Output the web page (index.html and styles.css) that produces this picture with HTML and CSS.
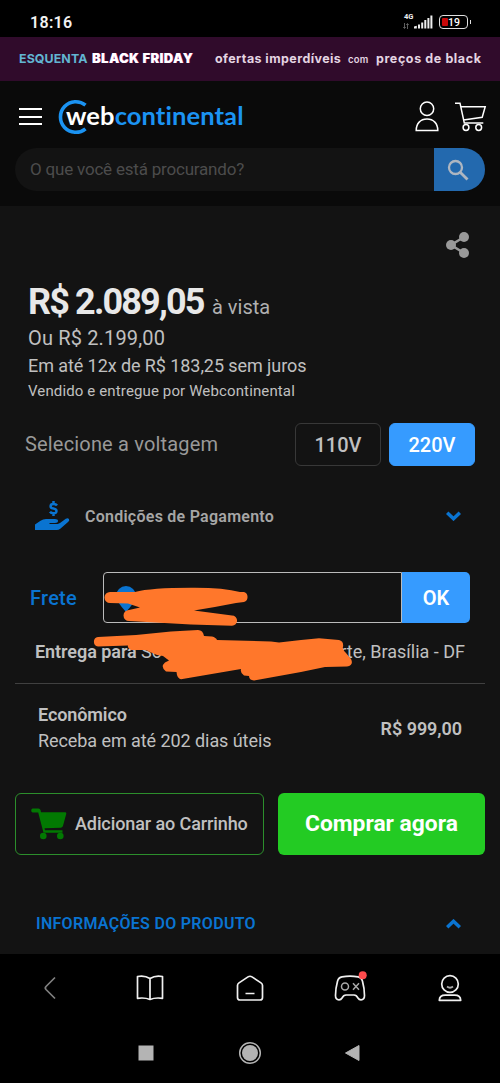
FILE: index.html
```html
<!DOCTYPE html>
<html lang="pt-BR">
<head>
<meta charset="utf-8">
<title>Webcontinental</title>
<link rel="stylesheet" href="styles.css">
</head>
<body>
<div class="status">
  <span class="clock">18:16</span>
  <div class="status-icons">
    <div class="network"><span class="net-type">4G</span>
      <svg class="arrows" width="6" height="6" viewBox="0 0 6 6" fill="none" stroke="#777" stroke-width=".8"><path d="M1.500 0v5M.3 4l1.200 1.500L2.700 4M4.500 6V1M3.300 2L4.500.5 5.700 2"/></svg>
    </div>
    <svg width="20" height="14" viewBox="0 0 20 14" fill="#eee"><path d="M1 13.500v-2l2.800-.8v2.800zM5 9.500h2v4H5zM8.200 7.500h2v6h-2zM11.300 5h2v8.500h-2zM14.400 3h2v10.500h-2zM17.400.5h2v13h-2z"/></svg>
    <div class="battery"><span class="battery-level"></span><span class="battery-text">19</span><span class="battery-tip"></span></div>
  </div>
</div>
<div class="promo">
  <span class="promo-pre">ESQUENTA</span><span class="promo-black">BLACK FRIDAY</span><span class="promo-offer">ofertas imperdíveis</span><span class="promo-com">com</span><span class="promo-price">preços de black</span>
</div>
<header class="header">
  <div class="header-row">
    <div class="burger"><i></i><i></i><i></i></div>
    <div class="logo">
      <svg class="logo-ring" width="32" height="36" viewBox="0 0 32 36" fill="none" stroke="#1b93f2" stroke-width="3.600"><path d="M27.500 6.200A15.300 15.300 0 1 0 27.500 29.800"/></svg>
      <span class="logo-web">web</span><span class="logo-cont">continental</span>
    </div>
    <div class="header-icons">
      <svg width="24" height="31" viewBox="0 0 24 31" fill="none" stroke="#fff" stroke-width="1.500"><circle cx="12" cy="7.700" r="6.700"/><path d="M1.200 29.500C1.200 22.500 5.500 18 12 18s10.800 4.500 10.800 11.500z"/></svg>
      <svg width="32" height="31" viewBox="0 0 32 31" fill="none" stroke="#fff" stroke-width="1.500"><path d="M0 2.200h5L9.300 22h19M5.800 5.800h24.400l-3 10.500L8.500 19"/><circle cx="11" cy="26.500" r="2.900"/><circle cx="23.700" cy="26.500" r="2.900"/></svg>
    </div>
  </div>
  <div class="search">
    <span class="search-text">O que você está procurando?</span>
    <div class="search-btn"><svg width="22" height="22" viewBox="0 0 22 22" fill="none" stroke="#aeb6c1" stroke-width="2.300"><circle cx="8.500" cy="8.500" r="6.500"/><path d="M13.200 13.200l7.300 7.300" stroke-width="2.800"/></svg></div>
  </div>
</header>
<main class="main">
  <div class="share"><svg width="24" height="26" viewBox="0 0 24 26" fill="#999" stroke="#999"><path d="M18 5L5 13l13 8" fill="none" stroke-width="2.500"/><g stroke="none"><circle cx="18" cy="5" r="5"/><circle cx="5" cy="13" r="5"/><circle cx="18" cy="21" r="5"/></g></svg></div>
  <section class="prices">
    <div class="price-row"><strong class="price">R$ 2.089,05</strong><span class="cash">à vista</span></div>
    <div class="or"><span>Ou R$ 2.199,00</span></div>
    <div class="parcels"><span>Em até 12x de R$ 183,25 sem juros</span></div>
    <div class="seller"><span>Vendido e entregue por Webcontinental</span></div>
  </section>
  <section class="voltage">
    <span class="voltage-label">Selecione a voltagem</span>
    <div class="volt">110V</div>
    <div class="volt volt-on">220V</div>
  </section>
  <section class="payment">
    <svg width="35" height="32" viewBox="0 0 35 32" fill="#0a74d1"><path d="M0 24.500l5.500-3.800Q8 19 11 19h9q3 0 3 1.900t-3 2h-5.500v1h8.200q1.300 0 2.300-.8l5.800-4.300q2-1.200 3.100.1 1 1.500-.6 2.800l-8 7q-1.600 1.300-3.500 1.300H0z"/><path d="M22 5.500Q21 4 18.500 4 15.600 4 15.600 6.200t2.900 2.300q3 .4 3 2.600t-3 2.200q-2.400 0-3.500-1.600M18.500 1v3.500M18.500 13v3" fill="none" stroke="#0a74d1" stroke-width="2.500"/></svg>
    <span class="payment-title">Condições de Pagamento</span>
    <svg width="15" height="10" viewBox="0 0 15 10" fill="none" stroke="#0a74d1" stroke-width="3.500"><path d="M1.200 1.700l6.300 6 6.300-6"/></svg>
  </section>
  <section class="shipping">
    <div class="zip-row">
      <span class="zip-label">Frete</span>
      <div class="zip-input"><svg width="20" height="26" viewBox="0 0 20 26"><path d="M10 0a10 10 0 0 1 10 10q0 5-10 16Q0 15 0 10A10 10 0 0 1 10 0z" fill="#0a74d1"/><circle cx="10" cy="9.500" r="3.500" fill="#131313"/></svg></div>
      <div class="zip-ok">OK</div>
    </div>
    <div class="deliver"><span class="deliver-b">Entrega para</span><span class="deliver-hid">So</span><span class="deliver-city">rte, Brasília - DF</span></div>
    <svg class="scribble" width="270" height="100" viewBox="90 585 270 100" fill="#ff772b">
      <path d="M109 592H134Q150 587.800 190 587.800 222 587.500 239 592H243A5.300 5.300 0 0 1 243 602L235 603Q215 607 193 610.500L231 615.500A5 5 0 0 1 231 625.700L190 624.500 128 621A5.500 5.500 0 0 1 128 610L139 607.500 127 603.500 109 603A5.500 5.500 0 0 1 109 592z"/>
      <path d="M97 637L135 635 170 631.500 197 630Q202 630 203 636L211 636.500Q215 637.500 216 640L270 641.500 278 642.500 300 640 318 638.300 338 640Q343 641 342 647 341 649 345 653L350 659Q353 665 346 666.500L324 667 300 672 253 680.500Q248 680 248 676L243 675.500Q239 673 240 669L180 679.300Q176 678.500 175.500 672L165 671.500Q159 667 164 662.500L168 660.500 162 656 156 655 149 652 145 650H130Q126 648 127 645.500L97 646.500A4.800 4.800 0 0 1 97 637z"/>
    </svg>
    <div class="option">
      <div class="option-info"><strong class="option-name">Econômico</strong><span class="option-time">Receba em até 202 dias úteis</span></div>
      <strong class="option-price">R$ 999,00</strong>
    </div>
  </section>
  <section class="actions">
    <div class="add"><svg width="36" height="32" viewBox="0 0 36 32" fill="#027902"><path d="M1.500.5h6q1.500 0 2 1.500l.5 2.200h24.500q1 .2.800 1.500L32 17.800q-.4 1.700-2 1.900l-16.500.6.500 2h17.500v2.500H12.500L7.200 4.500H1.500Q.2 4 .2 2.500T1.500.5z"/><circle cx="12.300" cy="28" r="3.300"/><circle cx="29.300" cy="28" r="3.300"/></svg><span class="add-text">Adicionar ao Carrinho</span></div>
    <div class="buy"><span>Comprar agora</span></div>
  </section>
  <section class="info">
    <span class="info-title">INFORMAÇÕES DO PRODUTO</span>
    <svg width="15" height="10" viewBox="0 0 15 10" fill="none" stroke="#0a74d1" stroke-width="3.500"><path d="M1.200 8.300l6.300-6 6.300 6"/></svg>
  </section>
</main>
<nav class="tabs">
  <div><svg width="32" height="32" viewBox="0 0 32 32" fill="none" stroke="#808080" stroke-width="1.700"><path d="M21 5.500l-9 9q-1.400 1.500 0 3l9 9"/></svg></div>
  <div><svg width="32" height="32" viewBox="0 0 32 32" fill="none" stroke="#f0f0f0" stroke-width="1.700" stroke-linejoin="round"><path d="M16 6.500q-5.500-3.500-12.500-2v21.800q7.500-1 12.500 1.200 5-2.200 12.500-1.200V4.500q-7-1.500-12.500 2zM16 6.500v21"/></svg></div>
  <div><svg width="32" height="32" viewBox="0 0 32 32" fill="none" stroke="#f0f0f0" stroke-width="1.700"><path d="M3.500 13.500q0-1.600 1.500-2.600l9-6q2-1.300 4 0l9 6q1.500 1 1.500 2.600v12q0 2.500-2.500 2.500H6q-2.500 0-2.500-2.500z"/><path d="M11.500 21.500h9" stroke-width="1.500"/></svg></div>
  <div><svg width="32" height="32" viewBox="0 0 32 32" fill="none" stroke="#f0f0f0" stroke-width="1.700"><path d="M8 4.800q8-1.200 16 0 3.500.5 4.500 4.500 2 7.500 2 14.200 0 4.300-3.500 4.300-2 0-3-1.800-1.500-3-4-3h-8q-2.500 0-4 3-1 1.800-3 1.800-3.500 0-3.500-4.300 0-6.700 2-14.200 1-4 4.500-4.500z"/><g stroke="#aaa" stroke-width="1.500"><circle cx="11" cy="14.500" r="3.500"/><path d="M19 11.300l6 6.400M25 11.300l-6 6.400"/></g><circle cx="28.700" cy="3.200" r="4" fill="#ff4b4d" stroke="none"/></svg></div>
  <div><svg width="32" height="32" viewBox="0 0 32 32" fill="none" stroke="#f0f0f0" stroke-width="1.700"><circle cx="16" cy="12" r="8.300"/><path d="M13 14.500q3 2.500 6 0" stroke="#aaa"/><path d="M5.300 28.300q.2-5.100 6-5.100h9.400q5.800 0 6 5.100z" stroke-linejoin="round"/></svg></div>
</nav>
<div class="sysnav">
  <svg width="16" height="16" viewBox="0 0 16 16"><path d="M.5.500h15v15H.5z" fill="#b4b4b4"/></svg>
  <svg width="24" height="24" viewBox="0 0 24 24"><circle cx="12" cy="12" r="10.300" fill="none" stroke="#b4b4b4" stroke-width="1.500"/><circle cx="12" cy="12" r="8" fill="#b4b4b4"/></svg>
  <svg width="16" height="18" viewBox="0 0 16 18"><path d="M15 1.500v15L1.500 9z" fill="#b4b4b4" stroke="#b4b4b4" stroke-linejoin="round"/></svg>
</div>
</body>
</html>
```
FILE: styles.css
```css
* { box-sizing: border-box; }
body { margin: 0; width: 500px; height: 1083px; overflow: hidden; background: #000; color: #c0c0c0; font-family: Roboto, sans-serif; }
svg { display: block; flex: none; }
span, strong { white-space: nowrap; }

.status { height: 37px; padding: 8px 30px 0; display: flex; justify-content: space-between; }
.clock { font-size: 16px; line-height: 30px; font-weight: 600; color: #f2f2f2; letter-spacing: 0.3px; }
.status-icons { display: flex; padding-top: 7px; height: 21px; margin-right: 2px; }
.network { width: 8px; display: flex; flex-direction: column; }
.net-type { font-size: 7.5px; line-height: 6px; font-weight: 700; color: #eee; margin: -1px 0 3px -1px; }
.arrows { margin-left: -2px; }
.battery { width: 29px; height: 14px; margin-left: 6px; border: 1.5px solid #e0e0e0; border-radius: 4px; position: relative; padding: 2px; display: flex; }
.battery-level { width: 6px; height: 8px; background: #c70808; border-radius: 1px; }
.battery-text { font-size: 10.5px; line-height: 9px; font-weight: 500; color: #fff; }
.battery-tip { position: absolute; right: -4px; top: 4px; width: 1.5px; height: 4px; background: #e0e0e0; }

.promo { height: 44px; background: #300b2b; color: #e4d5e2; padding: 0 0 1px 19px; display: flex; align-items: center; font-family: Inter, sans-serif; font-weight: 700; font-size: 12.5px; line-height: 16px; }
.promo-pre { width: 73px; color: #62b5d2; font-size: 12.4px; letter-spacing: 0.1px; }
.promo-black { width: 123px; color: #fff; font-weight: 900; font-size: 12.8px; letter-spacing: 0.55px; text-shadow: 0.5px 0 #e26cc8; }
.promo-offer { width: 133px; letter-spacing: 0.42px; }
.promo-com { width: 28px; font-size: 9.5px; font-weight: 600; padding-top: 3px; letter-spacing: 0.2px; }
.promo-price { letter-spacing: 0.6px; }

.header { height: 125px; padding: 0 15px; background: #0a0a0a; }
.header-row { height: 67px; padding: 18px 0 0 4px; display: flex; }
.burger { width: 23px; height: 17px; margin-top: 9px; display: flex; flex-direction: column; justify-content: space-between; }
.burger i { height: 2px; background: #fff; }
.logo { width: 200px; height: 36px; margin-left: 16px; position: relative; display: flex; padding-left: 8px; font-family: Lato, sans-serif; font-weight: 700; font-size: 25.5px; line-height: 32px; letter-spacing: 0.1px; }
.logo-ring { position: absolute; left: 0; top: 0; }
.logo-web, .logo-cont { position: relative; }
.logo-web { color: #fff; }
.logo-cont { color: #1b93f2; }
.header-icons { margin: 0 -2px 0 auto; padding-top: 2px; display: flex; gap: 16px; }
.search { height: 43px; border-radius: 22px; background: #131313; display: flex; overflow: hidden; }
.search-text { flex: 1; padding-left: 15px; font-size: 17px; letter-spacing: -0.2px; line-height: 43px; color: #4c4c4c; }
.search-btn { width: 51px; background: #2369ae; display: flex; padding: 11px 0 0 13px; }

.main { height: 748px; padding: 0 15px; background: #131313; }
.share { height: 80px; padding: 26px 15px 0 0; display: flex; justify-content: flex-end; }
.prices { padding-left: 13px; }
.price-row { height: 38px; display: flex; align-items: baseline; }
.price { font-size: 36px; line-height: 33px; color: #e8e8e8; width: 184px; letter-spacing: -1.85px; }
.cash { font-size: 20px; color: #b0b0b0; }
.or { font-size: 20px; letter-spacing: 0.15px; line-height: 29px; }
.parcels { font-size: 18px; letter-spacing: -0.08px; line-height: 26px; }
.seller { font-size: 15px; letter-spacing: 0.13px; line-height: 24px; }
.voltage { height: 63px; padding: 20px 10px 0; display: flex; gap: 8px; margin-bottom: 16px; }
.voltage-label { flex: 1; color: #999; font-size: 20px; letter-spacing: 0.17px; line-height: 43px; }
.volt { width: 86px; height: 43px; border: 1px solid #383838; border-radius: 6px; text-align: center; font-size: 20px; line-height: 42px; font-weight: 500; }
.volt-on { color: #fff; background: #369bff; border-color: #369bff; }
.payment { height: 68px; padding: 0 24px 0 20px; display: flex; align-items: center; }
.payment-title { flex: 1; margin-left: 15px; font-size: 16px; font-weight: 600; letter-spacing: 0.25px; color: #a6a6a6; }
.shipping { position: relative; height: 222px; padding-top: 22px; }
.zip-row { display: flex; height: 51px; padding-left: 15px; }
.zip-label { width: 73px; color: #0a74d1; font-size: 20px; letter-spacing: 0.25px; line-height: 53px; font-weight: 500; }
.zip-input { width: 299px; border: 1px solid #bbb; border-radius: 4px 0 0 4px; padding: 13px 12px 0; }
.zip-ok { width: 68px; color: #fff; background: #369bff; border-radius: 0 5px 5px 0; text-align: center; font-weight: 600; font-size: 20px; line-height: 53px; }
.deliver { height: 61px; border-bottom: 1px solid #404040; padding: 0 20px; display: flex; font-size: 18px; line-height: 58px; }
.deliver-b { width: 106px; font-weight: 600; letter-spacing: -0.05px; }
.deliver-hid { flex: 1; }
.scribble { position: absolute; left: 76px; top: 35px; }
.option { padding: 18px 23px 0; display: flex; justify-content: space-between; }
.option-info { display: flex; flex-direction: column; font-size: 18px; line-height: 26px; }
.option-name { font-weight: 600; letter-spacing: -0.1px; }
.option-time { letter-spacing: -0.07px; }
.option-price { font-size: 18px; line-height: 53px; font-weight: 600; letter-spacing: -0.05px; }
.actions { margin-top: 21px; display: flex; gap: 14px; }
.add { width: 249px; height: 62px; border: 1px solid #2c8f2c; border-radius: 6px; display: flex; align-items: center; padding-left: 15px; }
.add-text { margin-left: 8px; padding-bottom: 2px; font-size: 18px; font-weight: 500; letter-spacing: -0.1px; }
.buy { width: 207px; height: 62px; background: #23cb23; color: #fff; border-radius: 6px; text-align: center; font-size: 22.8px; line-height: 61px; font-weight: 700; }
.info { height: 99px; padding: 38px 24px 0 21px; display: flex; align-items: center; justify-content: space-between; }
.info-title { color: #0a74d1; font-size: 16px; font-weight: 600; letter-spacing: 0.3px; }

.tabs { height: 68px; display: grid; grid-template-columns: repeat(5, 1fr); justify-items: center; padding-top: 18px; }
.tabs svg { overflow: visible; }
.sysnav { height: 61px; padding: 0 140px 0 138px; display: flex; justify-content: space-between; align-items: center; }
.sysnav svg:nth-child(2) { margin-left: 2px; }
```
